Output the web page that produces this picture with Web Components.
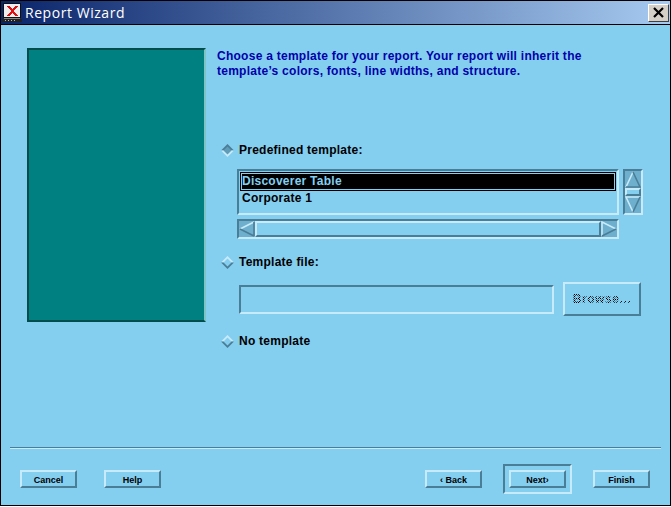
<!DOCTYPE html>
<html>
<head>
<meta charset="utf-8">
<title>Report Wizard</title>
<style>
  html, body { margin: 0; padding: 0; background: #fff; }
</style>
</head>
<body>
<report-wizard></report-wizard>

<script>
const bevelOut = 'border-color: #c8ebfb #4a7d96 #4a7d96 #c8ebfb;';
const bevelIn = 'border-color: #4a7d96 #c8ebfb #c8ebfb #4a7d96;';
const uiFont = '"Liberation Sans", sans-serif';

class WizTitlebar extends HTMLElement {
  connectedCallback() {
    this.attachShadow({ mode: 'open' });
    this.shadowRoot.innerHTML = `
      <style>
        :host {
          display: flex; align-items: center; height: 23px;
          border-bottom: 1px solid #000;
          background: linear-gradient(90deg, #0a246a, #a6caf0);
          color: #fff; font: 14px "Open Sans", sans-serif;
        }
        svg { margin: 0 3px 0 1px; flex: none; }
        span { flex: 1; letter-spacing: .55px; }
        button {
          width: 21px; height: 18px; margin-right: 1px; padding: 0; display: flex;
          align-items: center; justify-content: center;
          background: #d4d0c8; border: 1px solid; border-color: #fff #404040 #404040 #fff;
        }
      </style>
      <svg width="20" height="20" viewBox="0 0 20 20" shape-rendering="crispEdges">
        <rect x="1" y="0" width="18" height="15" fill="#111"/>
        <rect x="2" y="1" width="16" height="13" fill="#eee"/>
        <path d="M5 3h3l2 3 3-3h3l-4 5 4 5h-3l-3-3-2 3H5l4-5z" fill="#e01010"/>
        <rect x="2" y="15" width="16" height="1" fill="#888"/>
        <rect x="0" y="16" width="20" height="3" fill="#222"/>
        <path d="M3 17.5h1M6 17.5h1M9 17.5h1M12 17.5h1" stroke="#bbb"/>
      </svg>
      <span>Report Wizard</span>
      <button aria-label="Close">
        <svg style="margin:0" width="11" height="11" viewBox="0 0 11 11"><path d="M1 1l9 9M10 1l-9 9" stroke="#000" stroke-width="2.2"/></svg>
      </button>`;
  }
}

class WizRadio extends HTMLElement {
  connectedCallback() {
    const on = this.hasAttribute('checked');
    const top = on ? '#4a7d96' : '#c8ebfb';
    const bottom = on ? '#c8ebfb' : '#4a7d96';
    const fill = on ? '#5f9cb8' : '#84cef0';
    this.attachShadow({ mode: 'open' });
    this.shadowRoot.innerHTML = `
      <style>
        :host {
          display: flex; align-items: center; gap: 5px; height: 16px; padding-left: 4px;
          color: #000; font: bold 12px ${uiFont}; letter-spacing: .25px;
        }
        svg { flex: none; }
      </style>
      <svg width="13" height="13" viewBox="0 0 13 13">
        <polygon points="6.5,0 13,6.5 0,6.5" fill="${top}"/>
        <polygon points="0,6.5 13,6.5 6.5,13" fill="${bottom}"/>
        <polygon points="6.5,2.5 10.5,6.5 6.5,10.5 2.5,6.5" fill="${fill}"/>
      </svg>
      <slot></slot>`;
  }
}

class WizButton extends HTMLElement {
  connectedCallback() {
    this.attachShadow({ mode: 'open' });
    this.shadowRoot.innerHTML = `
      <style>
        :host {
          display: flex; align-items: center; justify-content: center; box-sizing: border-box;
          width: 57px; height: 18px; flex: none; padding-top: 1px;
          border: 2px solid; ${bevelOut}
          color: #000; font: bold 9px ${uiFont}; white-space: pre;
        }
      </style>
      <slot></slot>`;
  }
}

class WizBrowse extends HTMLElement {
  connectedCallback() {
    this.attachShadow({ mode: 'open' });
    this.shadowRoot.innerHTML = `
      <style>
        :host {
          display: flex; align-items: center; justify-content: center; box-sizing: border-box;
          width: 78px; height: 34px; flex: none;
          border: 2px solid; ${bevelOut}
        }
        span {
          font: bold 12px ${uiFont}; letter-spacing: .6px; color: transparent;
          background: repeating-conic-gradient(#000 0 25%, transparent 0 50%) 0 0 / 2px 2px;
          -webkit-background-clip: text; background-clip: text;
        }
      </style>
      <span><slot></slot></span>`;
  }
}

class WizList extends HTMLElement {
  connectedCallback() {
    this.attachShadow({ mode: 'open' });
    this.shadowRoot.innerHTML = `
      <style>
        :host {
          display: block; box-sizing: border-box; height: 46px; padding: 1px;
          border: 2px solid; ${bevelIn}
          color: #000; font: bold 12px ${uiFont}; letter-spacing: .25px;
        }
        .row { height: 16px; line-height: 14px; padding-left: 2px; }
        .sel {
          height: 19px; line-height: 17px; box-sizing: border-box; padding-left: 1px;
          border: 1px solid #000; background: #000; color: #84cef0;
          box-shadow: inset 0 0 0 1px #84cef0;
        }
      </style>
      <div class="row sel">Discoverer Table</div>
      <div class="row">Corporate 1</div>`;
  }
}

class WizHscroll extends HTMLElement {
  connectedCallback() {
    this.attachShadow({ mode: 'open' });
    this.shadowRoot.innerHTML = `
      <style>
        :host {
          display: flex; box-sizing: border-box; height: 20px;
          border: 2px solid; ${bevelIn}
          background: #6eafce;
        }
        svg { flex: none; display: block; }
        .slider { flex: 1; box-sizing: border-box; border: 2px solid; ${bevelOut} background: #84cef0; }
      </style>
      <svg width="16" height="16" viewBox="0 0 16 16">
        <polygon points="1,8 15,1 15,15" fill="#6eafce"/>
        <path d="M1 8L15 1" stroke="#c8ebfb" stroke-width="1.6"/>
        <path d="M1 8L15 15M15 15V1" stroke="#4a7d96" stroke-width="1.6"/>
      </svg>
      <div class="slider"></div>
      <svg width="16" height="16" viewBox="0 0 16 16">
        <polygon points="15,8 1,1 1,15" fill="#6eafce"/>
        <path d="M1 15V1L15 8" stroke="#c8ebfb" stroke-width="1.6" fill="none"/>
        <path d="M1 15L15 8" stroke="#4a7d96" stroke-width="1.6"/>
      </svg>`;
  }
}

class WizVscroll extends HTMLElement {
  connectedCallback() {
    this.attachShadow({ mode: 'open' });
    this.shadowRoot.innerHTML = `
      <style>
        :host {
          display: flex; flex-direction: column; box-sizing: border-box; height: 46px;
          border: 2px solid; ${bevelIn}
          background: #6eafce;
        }
        svg { flex: none; display: block; }
        .slider { flex: 1; box-sizing: border-box; border: 2px solid; ${bevelOut} background: #84cef0; }
      </style>
      <svg width="16" height="17" viewBox="0 0 16 17">
        <polygon points="8,1 1,16 15,16" fill="#6eafce"/>
        <path d="M1 16L8 1" stroke="#c8ebfb" stroke-width="1.6"/>
        <path d="M8 1L15 16H1" stroke="#4a7d96" stroke-width="1.6" fill="none"/>
      </svg>
      <div class="slider"></div>
      <svg width="16" height="17" viewBox="0 0 16 17">
        <polygon points="8,16 1,1 15,1" fill="#6eafce"/>
        <path d="M8 16L1 1H15" stroke="#c8ebfb" stroke-width="1.6" fill="none"/>
        <path d="M15 1L8 16" stroke="#4a7d96" stroke-width="1.6"/>
      </svg>`;
  }
}

class WizField extends HTMLElement {
  connectedCallback() {
    this.attachShadow({ mode: 'open' });
    this.shadowRoot.innerHTML = `
      <style>
        :host { display: block; box-sizing: border-box; width: 315px; height: 29px; border: 2px solid; ${bevelIn} }
      </style>`;
  }
}

class ReportWizard extends HTMLElement {
  connectedCallback() {
    this.attachShadow({ mode: 'open' });
    this.shadowRoot.innerHTML = `
      <style>
        :host {
          display: flex; flex-direction: column; box-sizing: border-box;
          width: 671px; height: 506px;
          border: 1px solid #000;
          background: #84cef0;
        }
        main { flex: 1; display: flex; gap: 11px; padding: 23px 0 0 26px; }
        .art {
          box-sizing: border-box; width: 179px; height: 274px; flex: none;
          background: #008080; border: 2px solid; border-color: #004d4d #7fc4c4 #004d4d #004d4d;
        }
        .side { display: flex; flex-direction: column; width: 426px; }
        .intro { margin: 0; padding-top: 1px; color: #0000aa; font: bold 12px/15px ${uiFont}; letter-spacing: .26px; white-space: nowrap; }
        .first { margin-top: 63px; }
        .lists { display: grid; grid-template-columns: 382px 20px; gap: 4px; margin: 11px 0 0 20px; }
        .second { margin-top: 15px; }
        .file { display: flex; align-items: center; gap: 9px; margin: 12px 0 0 22px; }
        .third { margin-top: 17px; }
        footer { height: 57px; margin: 0 9px; border-top: 1px solid #4a7d96; box-shadow: inset 0 1px 0 #c8ebfb; }
        .buttons { display: flex; align-items: center; height: 30px; margin: 16px -9px 0; padding: 0 20px 0 19px; }
        .gap { width: 27px; }
        .grow { flex: 1; }
        .frame { display: flex; box-sizing: border-box; padding: 4px; margin: 0 21px; border: 2px solid; ${bevelIn} }
      </style>
      <wiz-titlebar></wiz-titlebar>
      <main>
        <div class="art"></div>
        <div class="side">
          <p class="intro">Choose a template for your report. Your report will inherit the<br>template’s colors, fonts, line widths, and structure.</p>
          <wiz-radio class="first" checked>Predefined template:</wiz-radio>
          <div class="lists">
            <wiz-list></wiz-list>
            <wiz-vscroll></wiz-vscroll>
            <wiz-hscroll></wiz-hscroll>
          </div>
          <wiz-radio class="second">Template file:</wiz-radio>
          <div class="file">
            <wiz-field></wiz-field>
            <wiz-browse>Browse...</wiz-browse>
          </div>
          <wiz-radio class="third">No template</wiz-radio>
        </div>
      </main>
      <footer>
        <div class="buttons">
          <wiz-button>Cancel</wiz-button>
          <div class="gap"></div>
          <wiz-button>Help</wiz-button>
          <div class="grow"></div>
          <wiz-button>&lsaquo; Back</wiz-button>
          <div class="frame"><wiz-button>Next&rsaquo;</wiz-button></div>
          <wiz-button>Finish</wiz-button>
        </div>
      </footer>`;
  }
}

customElements.define('wiz-titlebar', WizTitlebar);
customElements.define('wiz-radio', WizRadio);
customElements.define('wiz-button', WizButton);
customElements.define('wiz-browse', WizBrowse);
customElements.define('wiz-list', WizList);
customElements.define('wiz-hscroll', WizHscroll);
customElements.define('wiz-vscroll', WizVscroll);
customElements.define('wiz-field', WizField);
customElements.define('report-wizard', ReportWizard);
</script>
</body>
</html>
